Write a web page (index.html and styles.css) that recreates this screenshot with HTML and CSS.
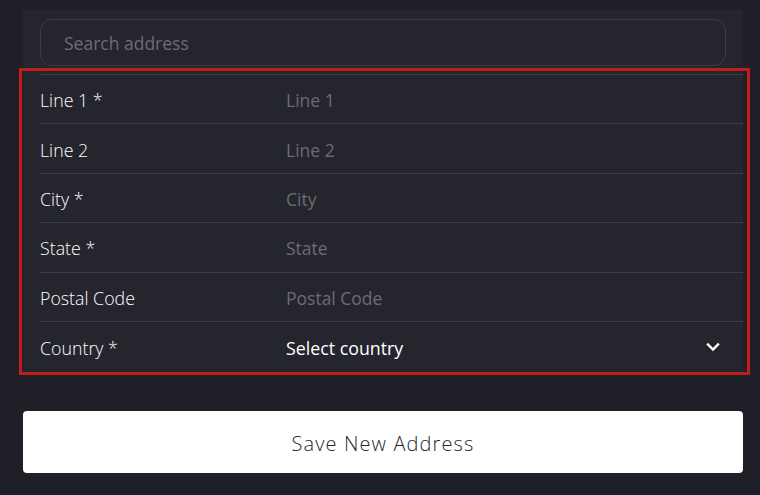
FILE: index.html
```html
<!DOCTYPE html>
<html lang="en">
<head>
<meta charset="utf-8">
<title>New Address</title>
<link rel="stylesheet" href="styles.css">
</head>
<body>
<main class="page">
  <section class="panel">
    <div class="search-wrap">
      <input class="search" type="text" placeholder="Search address">
    </div>
    <div class="fields">
      <div class="row"><label class="label">Line 1 *</label><input class="field" type="text" placeholder="Line 1"></div>
      <div class="row"><label class="label">Line 2</label><input class="field" type="text" placeholder="Line 2"></div>
      <div class="row"><label class="label">City *</label><input class="field" type="text" placeholder="City"></div>
      <div class="row"><label class="label">State *</label><input class="field" type="text" placeholder="State"></div>
      <div class="row"><label class="label">Postal Code</label><input class="field" type="text" placeholder="Postal Code"></div>
      <div class="row"><label class="label">Country *</label>
        <div class="select">
          <span class="select-text">Select country</span>
          <svg class="chevron" width="14" height="10" viewBox="0 0 14 10"><path d="M2 2.5 L7 7.5 L12 2.5" fill="none" stroke="#ffffff" stroke-width="2.4" stroke-linecap="square"/></svg>
        </div>
      </div>
    </div>
  </section>
  <button class="save" type="button">Save New Address</button>
</main>
</body>
</html>
```

FILE: styles.css
```css
* { box-sizing: border-box; }
html, body { margin: 0; padding: 0; }
body {
  background: #1f1f27;
  font-family: "Open Sans", "Noto Sans", sans-serif;
  color: #ffffff;
  width: 760px;
  height: 495px;
  overflow: hidden;
}
.page {
  padding: 10px 17px 0 23px;
  display: flex;
  flex-direction: column;
}
.panel {
  width: 720px;
  background: #25252e;
}
.search-wrap {
  padding: 9px 17px 0 17px;
  height: 62px;
}
.search {
  width: 686px;
  height: 47px;
  border: 1px solid #3b3b44;
  border-radius: 12px;
  background: transparent;
  padding: 1px 0 0 23px;
  font-family: inherit;
  font-size: 17.5px;
  color: #ffffff;
  outline: none;
}
.search::placeholder { color: #6c6c74; }
.fields {
  position: relative;
  padding: 2px 0 0 17px;
  width: 720px;
}
.fields::after {
  content: "";
  position: absolute;
  top: -4px;
  bottom: -3px;
  left: -4px;
  right: -7px;
  border: 3px solid #c21d1d;
  pointer-events: none;
}
.row {
  display: flex;
  align-items: center;
  border-top: 1px solid #3d3d45;
  height: 49.4px;
  padding-top: 2px;
}
.row:last-child { height: 51px; }
.label {
  width: 246px;
  flex: none;
  font-size: 17.8px;
  font-weight: 300;
  color: #ffffff;
}
.field {
  flex: 1;
  background: transparent;
  border: none;
  outline: none;
  padding: 0;
  font-family: inherit;
  font-size: 17.5px;
  color: #ffffff;
}
.field::placeholder { color: #6c6c74; }
.select {
  flex: 1;
  display: flex;
  align-items: center;
  justify-content: space-between;
  padding-right: 23px;
}
.select-text {
  font-size: 17.8px;
  font-weight: 500;
  color: #ffffff;
}
.chevron { display: block; margin-top: -2px; }
.save {
  margin-top: 39px;
  width: 720px;
  height: 62px;
  background: #ffffff;
  border: none;
  border-radius: 4px;
  font-family: inherit;
  font-size: 20px;
  font-weight: 300;
  letter-spacing: 1.1px;
  color: #262630;
  padding: 3px 0 0 0;
}
```
